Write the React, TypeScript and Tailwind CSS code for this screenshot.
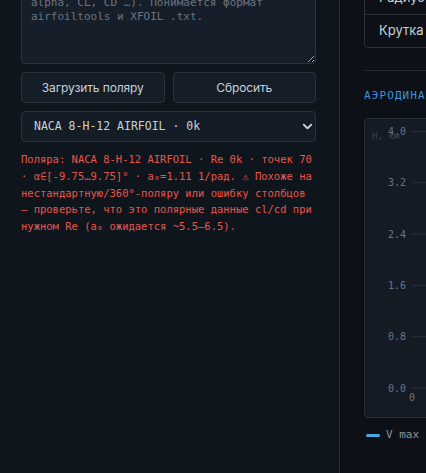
import { ChevronDown } from 'lucide-react'

const mono = { fontFamily: '"DejaVu Sans Mono", "Liberation Mono", monospace' }

const ticks = ['4.0', '3.2', '2.4', '1.6', '0.8', '0.0']

function AltitudeChart() {
  return (
    <svg className="absolute inset-0" width="320" height="300" style={mono}>
      <text x="7" y="20" fontSize="9" fill="#3b4450">Н, км</text>
      {ticks.map((t, i) => {
        const y = 12.5 + i * 51.3
        return (
          <g key={t}>
            <text x="41" y={y + 3.5} fontSize="10" textAnchor="end" fill="#6b7480">{t}</text>
            <line x1="47" x2="320" y1={y} y2={y} stroke="#28313b" strokeWidth="1" />
          </g>
        )
      })}
      <text x="44" y="282" fontSize="10" fill="#6b7480">0</text>
    </svg>
  )
}

export default function App() {
  return (
    <div className="flex h-[473px] w-[426px] overflow-hidden bg-[#0d1117]">
      <div className="w-[340px] shrink-0 border-r border-[#242b34] bg-[#0f151c] pl-[21px] pr-[23px]">
        <textarea
          className="-mt-[27px] block h-[91px] w-full resize-y rounded border border-[#29323d] bg-[#161e29] px-[9px] pt-[8px] text-[11px] leading-[14px] text-[#c9d1d9] outline-none placeholder:text-[#6b7480]"
          style={mono}
          placeholder={'Вставьте полярные данные (столбцы\nalpha, CL, CD …). Понимается формат\nairfoiltools и XFOIL .txt.'}
        />

        <div className="mt-[8px] grid grid-cols-2 gap-2" style={{ fontFamily: 'Inter, "Noto Sans", sans-serif' }}>
          <button className="h-[31px] rounded border border-[#29323d] bg-[#151d27] text-[12px] tracking-[-0.01em] text-[#c9d1d9]">
            Загрузить поляру
          </button>
          <button className="h-[31px] rounded border border-[#29323d] bg-[#151d27] text-[12px] tracking-[-0.01em] text-[#c9d1d9]">
            Сбросить
          </button>
        </div>

        <div className="relative mt-[8px]">
          <select
            className="block h-[31px] w-full appearance-none rounded border border-[#29323d] bg-[#141c26] pl-[12px] text-[11.5px] text-[#c9d1d9] outline-none"
            style={mono}
            defaultValue="naca"
          >
            <option value="naca">NACA 8-H-12 AIRFOIL · 0k</option>
          </select>
          <ChevronDown className="pointer-events-none absolute right-[1px] top-[8px] h-[15px] w-[15px] text-[#d0d7de]" strokeWidth={3} />
        </div>

        <p className="mt-[9px] text-[10.5px] leading-[1.6] text-[#e8564c]" style={mono}>
          Поляра: NACA 8-H-12 AIRFOIL · Re 0k · точек 70 · α∈[-9.75…9.75]° · a₀=1.11 1/рад. ⚠ Похоже на
          нестандартную/360°-поляру или ошибку столбцов — проверьте, что это полярные данные cl/cd при
          нужном Re (a₀ ожидается ~5.5–6.5).
        </p>
      </div>

      <div className="w-[320px] shrink-0 pl-6">
        <div
          className="-mt-[19px] rounded-b border border-[#2a313a] bg-[#0d1117] text-[13px] text-[#c9d1d9]"
          style={{ fontFamily: 'Inter, "Noto Sans", sans-serif' }}
        >
          <div className="flex h-[33px] items-center border-b border-[#2a313a] px-[14px]">Радиус винта</div>
          <div className="flex h-[32px] items-center px-[14px]">Крутка — линейная</div>
        </div>

        <div className="mt-[22px] border-t border-[#232a33] pt-[18px]">
          <div className="whitespace-nowrap text-[11px] leading-[14px] tracking-[0.1em] text-[#3f92dc]" style={mono}>
            АЭРОДИНАМИКА
          </div>
        </div>

        <div className="relative mt-[15px] h-[300px] rounded border border-[#262e38] bg-[#141b24]">
          <AltitudeChart />
        </div>

        <div className="mt-[10px] flex h-[14px] items-center gap-[6px] pl-[2px]" style={mono}>
          <span className="h-[3px] w-[14px] rounded-full bg-[#4aa8e0]" />
          <span className="text-[11px] text-[#8b949e]">V max</span>
        </div>
      </div>
    </div>
  )
}
